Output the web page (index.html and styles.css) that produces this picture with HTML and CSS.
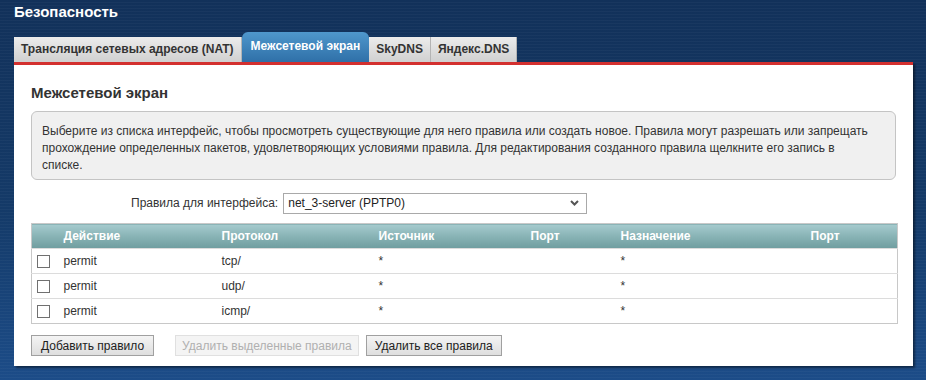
FILE: index.html
```html
<!DOCTYPE html>
<html lang="ru">
<head>
<meta charset="utf-8">
<link rel="stylesheet" href="styles.css">
</head>
<body>
<div class="page">
  <h1 class="title">Безопасность</h1>
  <div class="tabs">
    <div class="tab">Трансляция сетевых адресов (NAT)</div>
    <div class="tab active">Межсетевой экран</div>
    <div class="tab">SkyDNS</div>
    <div class="tab">Яндекс.DNS</div>
  </div>
  <div class="panel">
    <h2 class="heading">Межсетевой экран</h2>
    <div class="info">Выберите из списка интерфейс, чтобы просмотреть существующие для него правила или создать новое. Правила могут разрешать или запрещать прохождение определенных пакетов, удовлетворяющих условиями правила. Для редактирования созданного правила щелкните его запись в списке.</div>
    <div class="iface">
      <span class="iface-label">Правила для интерфейса:</span>
      <div class="select"><span>net_3-server (PPTP0)</span>
        <svg width="9" height="6" viewBox="0 0 9 6"><path d="M1 1 L4.5 4.5 L8 1" fill="none" stroke="#555" stroke-width="2"/></svg>
      </div>
    </div>
    <table class="rules">
      <colgroup>
        <col class="w-chk"><col class="w-act"><col class="w-proto"><col class="w-src"><col class="w-port"><col class="w-dst"><col class="w-port2">
      </colgroup>
      <thead>
        <tr><th></th><th>Действие</th><th>Протокол</th><th>Источник</th><th>Порт</th><th>Назначение</th><th>Порт</th></tr>
      </thead>
      <tbody>
        <tr><td class="c-chk"><span class="chk"></span></td><td>permit</td><td>tcp/</td><td>*</td><td></td><td>*</td><td></td></tr>
        <tr><td class="c-chk"><span class="chk"></span></td><td>permit</td><td>udp/</td><td>*</td><td></td><td>*</td><td></td></tr>
        <tr><td class="c-chk"><span class="chk"></span></td><td>permit</td><td>icmp/</td><td>*</td><td></td><td>*</td><td></td></tr>
      </tbody>
    </table>
    <div class="buttons">
      <button class="btn">Добавить правило</button>
      <button class="btn disabled">Удалить выделенные правила</button>
      <button class="btn narrow">Удалить все правила</button>
    </div>
  </div>
</div>
</body>
</html>
```
FILE: styles.css
```css
* { box-sizing: border-box; }
html, body { margin: 0; padding: 0; }
body {
  width: 926px;
  height: 380px;
  overflow: hidden;
  font-family: "Liberation Sans", Arial, sans-serif;
  background:
    repeating-linear-gradient(to bottom, rgba(255,255,255,0) 0, rgba(255,255,255,0) 2px, rgba(255,255,255,0.03) 2px, rgba(255,255,255,0.03) 3px),
    linear-gradient(to bottom, #12315a 0%, #143a68 55%, #1c4c88 100%);
}
.page { padding: 0 0 0 14px; }
.title {
  margin: 0;
  padding-top: 3px;
  height: 33px;
  font-size: 15px;
  font-weight: bold;
  color: #fff;
  line-height: 18px;
}
.tabs {
  display: flex;
  align-items: flex-end;
  height: 29px;
}
.tab {
  height: 25px;
  line-height: 25px;
  padding: 0 7px;
  font-size: 12px;
  font-weight: bold;
  color: #333;
  background: linear-gradient(to bottom, #ececec, #d0d0d0);
  border-right: 1px solid #b4b4b4;
}
.tab.active {
  height: 30px;
  line-height: 29px;
  padding: 0 9px;
  color: #fff;
  border-radius: 6px 6px 0 0;
  background: linear-gradient(to bottom, #4f97cc, #2f70a8);
  border-right: none;
}
.panel {
  width: 899px;
  background: #fff;
  border-top: 3px solid #d3302f;
  box-shadow: 2px 2px 2px rgba(0,0,0,0.45);
  padding: 19px 17px 14px 17px;
  height: 304px;
}
.heading {
  margin: 0;
  font-size: 15px;
  font-weight: bold;
  color: #333;
  line-height: 18px;
  height: 27px;
}
.info {
  background: #f0f0f0;
  border: 1px solid #c4c4c4;
  border-radius: 6px;
  padding: 11px 22px 10px 10px;
  font-size: 12px;
  line-height: 17px;
  color: #333;
  height: 69px;
}
.iface {
  display: flex;
  align-items: center;
  margin-top: 12px;
  padding-left: 100px;
  height: 22px;
}
.iface-label {
  font-size: 12px;
  color: #333;
  margin-right: 5px;
}
.select {
  width: 304px;
  height: 21px;
  border: 1px solid #a9a9a9;
  background: #fff;
  display: flex;
  align-items: center;
  justify-content: space-between;
  padding: 0 7px 0 4px;
  font-size: 12px;
  color: #222;
}
.rules {
  margin-top: 9px;
  width: 866px;
  table-layout: fixed;
  border-collapse: collapse;
  border: 1px solid #c8c8c8;
  font-size: 12px;
}
.w-chk { width: 32px; }
.w-act { width: 158px; }
.w-proto { width: 157px; }
.w-src { width: 152px; }
.w-port { width: 90px; }
.w-dst { width: 190px; }
.w-port2 { width: 87px; }
.rules th {
  height: 25px;
  padding: 0;
  text-align: left;
  font-weight: bold;
  color: #fff;
  background: linear-gradient(to bottom, #a6cbce 0%, #88b3b5 50%, #6f9d9f 100%);
}
.rules td {
  height: 25px;
  padding: 0;
  color: #333;
  border-top: 1px solid #dcdcdc;
}
.rules td.c-chk { padding-left: 5px; }
.chk {
  display: block;
  width: 13px;
  height: 13px;
  border: 1px solid #707070;
  background: #fff;
}
.buttons {
  display: flex;
  margin-top: 11px;
}
.btn {
  font-family: "Liberation Sans", Arial, sans-serif;
  font-size: 12px;
  height: 21px;
  padding: 0 9px;
  color: #222;
  background: linear-gradient(to bottom, #f4f4f4, #dedede);
  border: 1px solid #a0a0a0;
  margin-right: 21px;
}
.btn.disabled {
  padding: 0 6px;
  color: #b0b0b0;
  background: #f4f4f4;
  border-color: #e0e0e0;
  margin-right: 7px;
}
.btn.narrow { padding: 0 8px; }
```
